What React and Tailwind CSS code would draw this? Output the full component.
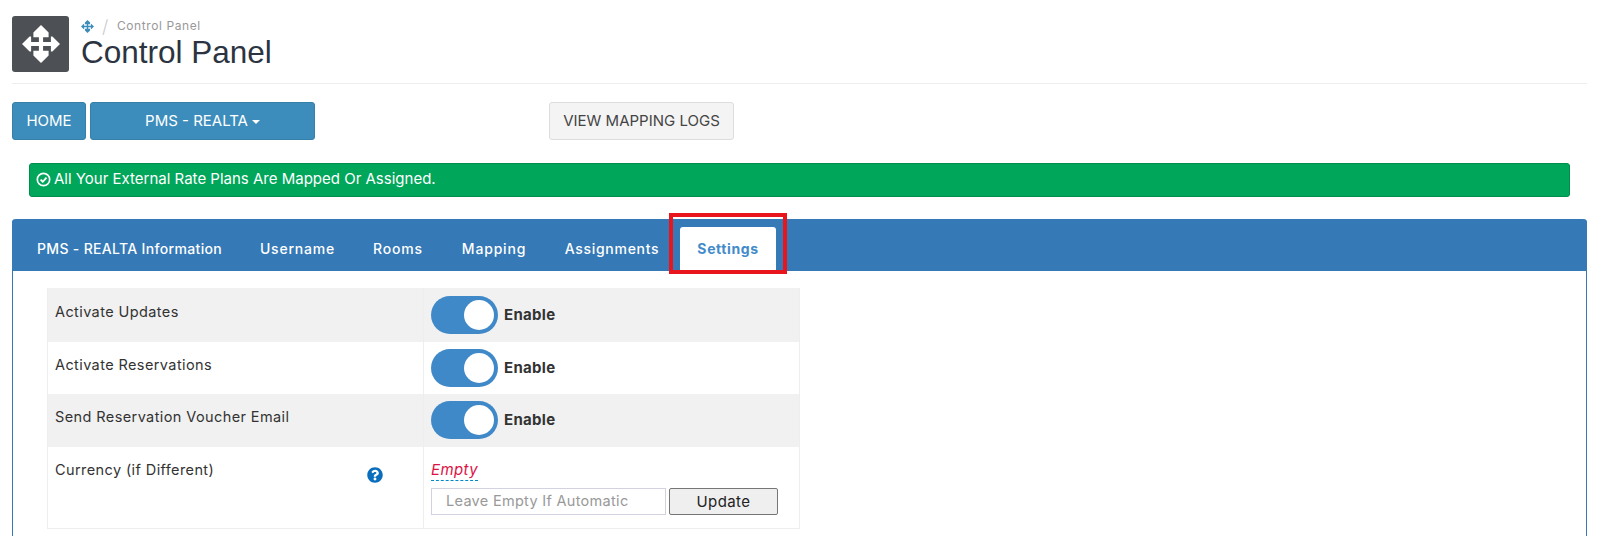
import { FaQuestionCircle } from 'react-icons/fa';

const tabs = [
  { label: 'PMS - REALTA Information', width: 'w-[219px]', tracking: 'tracking-[0.33px]' },
  { label: 'Username', width: 'w-[109px]', tracking: 'tracking-[0.8px]' },
  { label: 'Rooms', width: 'w-[84px]', tracking: 'tracking-[0.8px]' },
  { label: 'Mapping', width: 'w-[100px]', tracking: 'tracking-[0.8px]' },
  { label: 'Assignments', width: 'w-[128px]', tracking: 'tracking-[0.7px]' },
];

// four-way arrow, same shape as the old font-awesome "arrows" glyph
const ArrowsIcon = ({ className }) => (
  <svg viewBox="0 0 100 100" className={className} fill="currentColor">
    <path d="M50 0 L70 20 L70 32 L55.5 32 L55.5 44.5 L76 44.5 L76 30 L80 30 L100 50 L80 70 L76 70 L76 55.5 L55.5 55.5 L55.5 68 L70 68 L70 80 L50 100 L30 80 L30 68 L44.5 68 L44.5 55.5 L24 55.5 L24 70 L20 70 L0 50 L20 30 L24 30 L24 44.5 L44.5 44.5 L44.5 32 L30 32 L30 20 Z" />
  </svg>
);

const CheckCircle = ({ className }) => (
  <svg viewBox="0 0 16 16" className={className} fill="none" stroke="currentColor">
    <circle cx="8" cy="8" r="6.6" strokeWidth="1.8" />
    <path d="M4.9 8.2 L7.2 10.4 L11.2 5.9" strokeWidth="2" />
  </svg>
);

const Toggle = () => (
  <div className="flex items-center gap-[6px]">
    <div className="flex h-[38px] w-[67px] items-center justify-end rounded-full bg-[#4089c9] pr-1">
      <div className="h-[30px] w-[30px] rounded-full bg-white" />
    </div>
    <span className="text-[15px] font-bold tracking-[0.3px] text-[#333]">Enable</span>
  </div>
);

const SettingRow = ({ label, height, striped, labelPad, togglePad }) => (
  <div className={`flex ${height} ${striped ? 'bg-[#f1f1f1]' : 'bg-white'}`}>
    <div className={`w-[376px] border-r border-[#eee] pl-[7px] ${labelPad} text-[14.5px] leading-[22px] tracking-[0.4px] text-[#333]`}>
      {label}
    </div>
    <div className={`flex flex-1 items-start pl-[7px] ${togglePad}`}>
      <Toggle />
    </div>
  </div>
);

export default function App() {
  return (
    <div className="h-[536px] w-[1603px] overflow-hidden bg-white pl-3 pr-4 pt-4 font-['Inter',sans-serif] text-[#333]">
      {/* Page header */}
      <div className="flex h-[68px] border-b border-[#eee]">
        <div className="flex h-[56px] w-[57px] items-center justify-center rounded-[3px] bg-[#4d5054] text-white">
          <ArrowsIcon className="h-[38px] w-[38px]" />
        </div>
        <div className="pl-3 pt-px">
          <div className="flex h-[18px] items-center text-[12px] tracking-[0.6px] text-[#999]">
            <ArrowsIcon className="h-[13px] w-[13px] text-[#3c8dbc]" />
            <span className="px-[8px] text-[18px] font-light text-[#ccc]">/</span>
            <span>Control Panel</span>
          </div>
          <h1 className="font-['Liberation_Sans',sans-serif] text-[31.5px] leading-[34px] text-[#2b3440]">Control Panel</h1>
        </div>
      </div>

      {/* Action buttons */}
      <div className="mt-[18px] flex">
        <button className="h-[38px] w-[74px] rounded-[3px] border border-[#367fa9] bg-[#3c8dbc] text-[15px] text-white">HOME</button>
        <button className="ml-1 flex h-[38px] w-[225px] items-center justify-center gap-1 rounded-[3px] border border-[#367fa9] bg-[#3c8dbc] text-[15px] text-white">
          PMS - REALTA
          <span className="mt-[2px] h-0 w-0 border-x-4 border-t-4 border-x-transparent border-t-white" />
        </button>
        <button className="ml-[234px] h-[38px] w-[185px] rounded-[3px] border border-[#ddd] bg-[#f4f4f4] text-[15px] text-[#444]">VIEW MAPPING LOGS</button>
      </div>

      {/* Alert */}
      <div className="ml-[17px] mr-[17px] mt-[23px] flex h-[34px] items-center gap-[3px] rounded-[3px] border border-[#008d4c] bg-[#00a65a] pb-[2px] pl-[6px] text-[15px] text-white">
        <CheckCircle className="h-[15px] w-[15px]" />
        All Your External Rate Plans Are Mapped Or Assigned.
      </div>

      {/* Tabbed panel */}
      <div className="mt-[22px] h-[340px] rounded-t-[4px] border-x border-[#3579b6]">
        <div className="-mx-px flex h-[52px] items-end gap-1 rounded-t-[4px] bg-[#3579b6] pl-2">
          {tabs.map((tab) => (
            <div key={tab.label} className={`flex h-[44px] ${tab.width} ${tab.tracking} items-center justify-center pb-[2px] text-[14px] font-medium text-white`}>
              {tab.label}
            </div>
          ))}
          <div className="relative flex h-[44px] w-[96px] items-center justify-center rounded-t-[3px] bg-white pb-[2px] text-[14px] font-bold tracking-[0.6px] text-[#428bca]">
            Settings
            <div className="absolute -bottom-[3px] -left-[11px] -right-[11px] -top-[14px] border-4 border-[#e8161c]" />
          </div>
        </div>

        <div className="ml-[34px] mt-[17px] w-[753px] border-b border-l border-r border-[#eee]">
          <SettingRow label="Activate Updates" height="h-[54px]" labelPad="pt-[13px]" togglePad="pt-2" striped />
          <SettingRow label="Activate Reservations" height="h-[52px]" labelPad="pt-3" togglePad="pt-[7px]" />
          <SettingRow label="Send Reservation Voucher Email" height="h-[53px]" labelPad="pt-3" togglePad="pt-[7px]" striped />
          <div className="flex h-[81px]">
            <div className="flex w-[376px] items-start justify-between border-r border-[#eee] pl-[7px] pr-10 pt-3 text-[14.5px] leading-[22px] tracking-[0.4px]">
              Currency (if Different)
              <FaQuestionCircle className="mt-[8px] h-4 w-4 text-[#0a6ebd]" />
            </div>
            <div className="flex-1 pl-[7px] pt-[13px]">
              <span className="block w-fit border-b border-dashed border-[#0088cc] text-[15px] italic leading-[20px] tracking-[0.4px] text-[#dd1144]">Empty</span>
              <div className="mt-[7px] flex gap-[3px]">
                <input
                  className="h-[27px] w-[235px] border border-[#d2d2e0] pb-[3px] pl-[14px] text-[14.5px] tracking-[0.3px] outline-none placeholder:text-[#999]"
                  placeholder="Leave Empty If Automatic"
                />
                <button className="h-[27px] w-[109px] rounded-[2px] border border-[#767676] bg-[#efefef] pt-[2px] text-[15px] tracking-[0.4px] text-[#222]">Update</button>
              </div>
            </div>
          </div>
        </div>
      </div>
    </div>
  );
}
